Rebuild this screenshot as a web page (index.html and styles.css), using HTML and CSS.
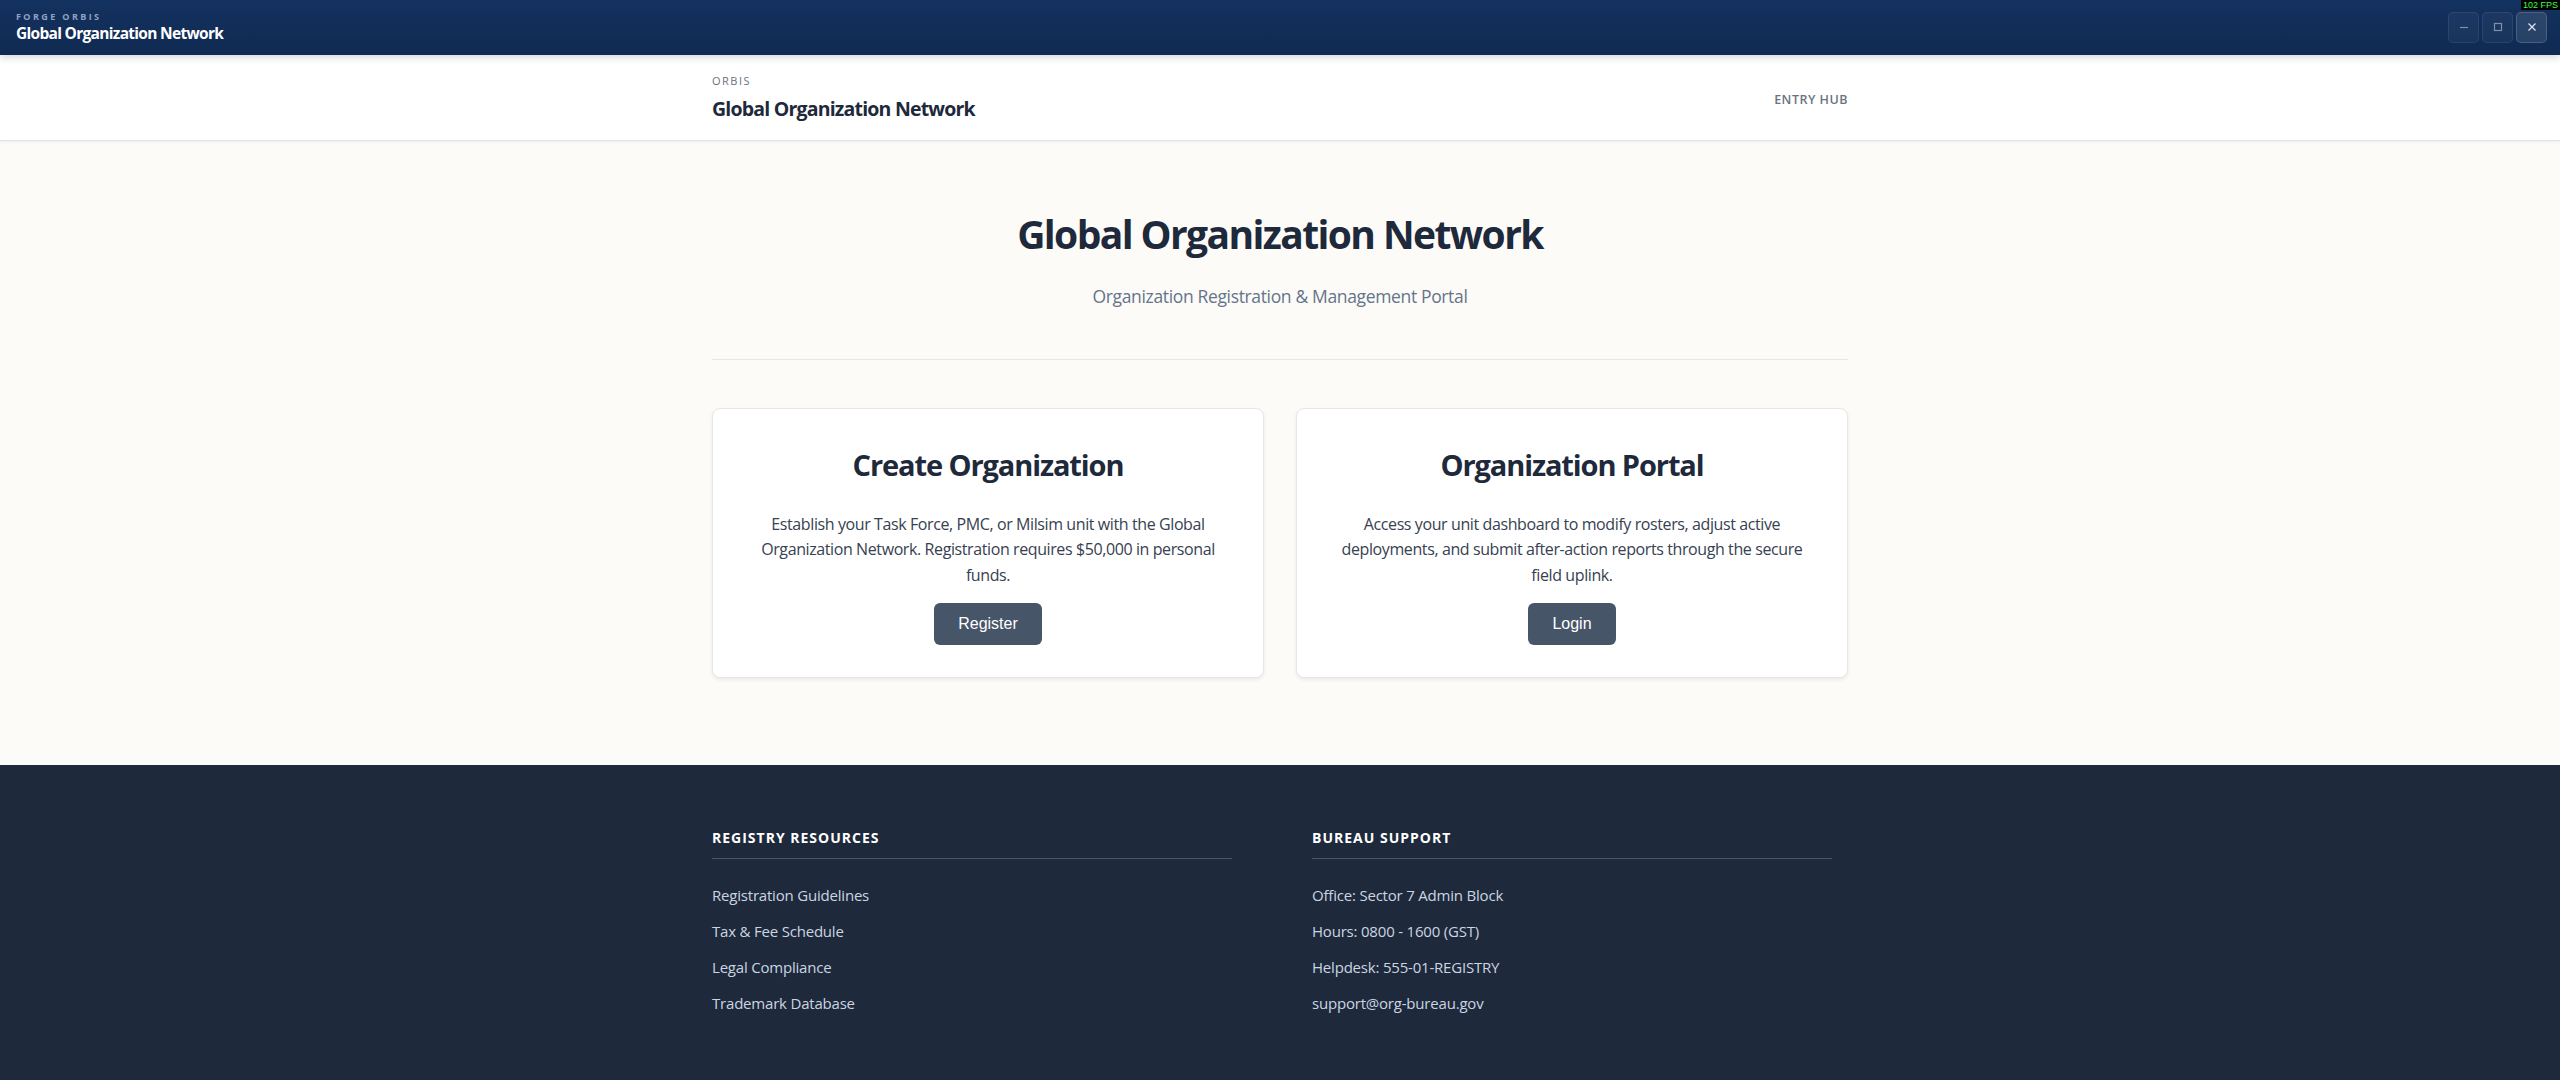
FILE: index.html
```html
<!DOCTYPE html>
<html lang="en">
<head>
    <meta charset="UTF-8">
    <meta name="viewport" content="width=device-width, initial-scale=1.0">
    <title>Global Organization Network</title>
    <link rel="stylesheet" href="styles.css">
</head>
<body>
    <div class="titlebar">
        <div class="app-name">
            <span class="app-tag">FORGE ORBIS</span>
            <span class="app-title">Global Organization Network</span>
        </div>
        <div class="window-controls">
            <button class="win-btn" title="Minimize">
                <svg width="10" height="10" viewBox="0 0 10 10"><line x1="1" y1="5.5" x2="9" y2="5.5" stroke="#7f8fa6" stroke-width="1.2"/></svg>
            </button>
            <button class="win-btn" title="Maximize">
                <svg width="10" height="10" viewBox="0 0 10 10"><rect x="1.5" y="1.5" width="7" height="7" fill="none" stroke="#7f8fa6" stroke-width="1.2"/></svg>
            </button>
            <button class="win-btn close" title="Close">
                <svg width="10" height="10" viewBox="0 0 10 10"><path d="M1.5 1.5 L8.5 8.5 M8.5 1.5 L1.5 8.5" stroke="#dfe6f0" stroke-width="1.2"/></svg>
            </button>
        </div>
        <div class="fps">102 FPS</div>
    </div>

    <header class="site-header">
        <div class="container header-row">
            <div class="brand">
                <span class="brand-tag">ORBIS</span>
                <span class="brand-title">Global Organization Network</span>
            </div>
            <nav class="header-nav">
                <a href="#">ENTRY HUB</a>
            </nav>
        </div>
    </header>

    <main class="main">
        <div class="container">
            <section class="hero">
                <h1>Global Organization Network</h1>
                <p class="subtitle">Organization Registration &amp; Management Portal</p>
            </section>

            <section class="cards">
                <div class="card">
                    <h2>Create Organization</h2>
                    <p>Establish your Task Force, PMC, or Milsim unit with the Global Organization Network. Registration requires $50,000 in personal funds.</p>
                    <button class="btn">Register</button>
                </div>
                <div class="card">
                    <h2>Organization Portal</h2>
                    <p>Access your unit dashboard to modify rosters, adjust active deployments, and submit after-action reports through the secure field uplink.</p>
                    <button class="btn">Login</button>
                </div>
            </section>
        </div>
    </main>

    <footer class="site-footer">
        <div class="container footer-grid">
            <div class="footer-col">
                <h3>REGISTRY RESOURCES</h3>
                <ul>
                    <li><a href="#">Registration Guidelines</a></li>
                    <li><a href="#">Tax &amp; Fee Schedule</a></li>
                    <li><a href="#">Legal Compliance</a></li>
                    <li><a href="#">Trademark Database</a></li>
                </ul>
            </div>
            <div class="footer-col">
                <h3>BUREAU SUPPORT</h3>
                <ul>
                    <li>Office: Sector 7 Admin Block</li>
                    <li>Hours: 0800 - 1600 (GST)</li>
                    <li>Helpdesk: 555-01-REGISTRY</li>
                    <li>support@org-bureau.gov</li>
                </ul>
            </div>
        </div>
    </footer>
</body>
</html>
```

FILE: styles.css
```css
body {
    margin: 0;
    font-family: "Open Sans", "Noto Sans", sans-serif;
    line-height: 1.6;
    color: #334155;
    background: #fcfbf7;
}
.container {
    max-width: 1200px;
    margin: 0 auto;
    padding: 0 32px;
    box-sizing: border-box;
}

/* app title bar */
.titlebar {
    position: relative;
    z-index: 2;
    height: 55px;
    box-sizing: border-box;
    padding: 11px 13px 12px 16px;
    display: flex;
    justify-content: space-between;
    align-items: center;
    background: linear-gradient(180deg, #143260 0%, #0f2a52 100%);
    box-shadow: 0 2px 8px rgba(0, 0, 0, 0.18);
}
.app-name {
    display: flex;
    flex-direction: column;
}
.app-tag {
    font-size: 9px;
    line-height: 12px;
    font-weight: 700;
    letter-spacing: 2.4px;
    color: #8ea3c2;
}
.app-title {
    font-size: 15.5px;
    line-height: 20px;
    font-weight: 700;
    color: #ffffff;
    letter-spacing: -0.7px;
}
.window-controls {
    display: flex;
    gap: 3px;
}
.win-btn {
    width: 31px;
    height: 31px;
    padding: 0;
    display: flex;
    justify-content: center;
    align-items: center;
    background: rgba(255, 255, 255, 0.04);
    border: 1px solid rgba(255, 255, 255, 0.08);
    border-radius: 5px;
    cursor: pointer;
}
.win-btn.close {
    background: rgba(255, 255, 255, 0.1);
    border-color: rgba(255, 255, 255, 0.16);
}
.fps {
    position: absolute;
    top: 0;
    right: 0;
    padding: 0 2px;
    background: #000;
    color: #3cff3c;
    font-family: "Liberation Sans", Arial, sans-serif;
    font-size: 9px;
    line-height: 10px;
}

/* site header */
.site-header {
    background: #ffffff;
    border-bottom: 1px solid #e2e4e8;
    box-shadow: 0 1px 3px rgba(0, 0, 0, 0.06);
}
.header-row {
    display: flex;
    justify-content: space-between;
    align-items: center;
    padding-top: 17px;
    padding-bottom: 15px;
}
.brand {
    display: flex;
    flex-direction: column;
}
.brand-tag {
    font-size: 11px;
    letter-spacing: 1.5px;
    color: #6b7280;
    margin-bottom: 3px;
}
.brand-title {
    font-size: 19.5px;
    line-height: 32px;
    font-weight: 700;
    color: #1e293b;
    letter-spacing: -0.8px;
}
.header-nav a {
    font-size: 12.5px;
    font-weight: 600;
    letter-spacing: 0.5px;
    color: #6b7280;
    text-decoration: none;
}

/* landing content */
.main {
    padding: 61px 0 87px;
}
.hero {
    text-align: center;
    padding-bottom: 48px;
    border-bottom: 1px solid #e5e7eb;
}
.hero h1 {
    margin: 0 0 16px;
    font-size: 39px;
    line-height: 64px;
    font-weight: 700;
    color: #1e293b;
    letter-spacing: -1.6px;
}
.subtitle {
    margin: 0;
    font-size: 17.5px;
    line-height: 29px;
    color: #64748b;
    letter-spacing: -0.35px;
}
.cards {
    display: grid;
    grid-template-columns: 1fr 1fr;
    gap: 32px;
    margin-top: 48px;
}
.card {
    background: #ffffff;
    border: 1px solid #e5e7eb;
    border-radius: 8px;
    box-shadow: 0 2px 4px rgba(0, 0, 0, 0.07);
    padding: 32px;
    text-align: center;
}
.card h2 {
    margin: 0 0 23px;
    font-size: 29px;
    line-height: 48px;
    font-weight: 700;
    color: #1e293b;
    letter-spacing: -1.1px;
}
.card p {
    margin: 0 0 15px;
    font-size: 16px;
    color: #374151;
    letter-spacing: -0.4px;
}
.btn {
    padding: 12px 24px;
    font-family: "Liberation Sans", Arial, sans-serif;
    font-size: 16px;
    color: #ffffff;
    background: #475569;
    border: none;
    border-radius: 6px;
    cursor: pointer;
}
.btn:hover {
    background: #334155;
}

/* footer */
.site-footer {
    background: #1e293b;
    padding: 62px 0 64px;
}
.footer-grid {
    display: grid;
    grid-template-columns: 520px 520px;
    column-gap: 80px;
}
.footer-col h3 {
    margin: 0 0 24px;
    padding-bottom: 8px;
    border-bottom: 1px solid #475569;
    font-size: 14px;
    font-weight: 700;
    letter-spacing: 1px;
    color: #ffffff;
}
.footer-col ul {
    list-style: none;
    margin: 0;
    padding: 0;
}
.footer-col li {
    margin-bottom: 12px;
    font-size: 15px;
    color: #cbd5e1;
    letter-spacing: -0.2px;
}
.footer-col a {
    color: #cbd5e1;
    text-decoration: none;
}
```
